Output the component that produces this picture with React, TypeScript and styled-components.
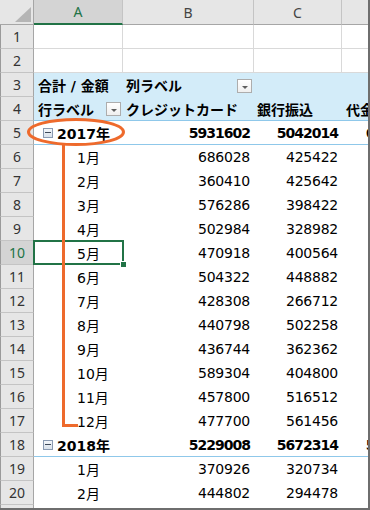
import styled, { createGlobalStyle } from "styled-components";

const GlobalStyle = createGlobalStyle`
  html, body {
    margin: 0;
    padding: 0;
    background: #fff;
  }
`

const Frame = styled.div`
  position: relative;
  width: 370px;
  height: 510px;
  box-sizing: border-box;
  border-right: 2px solid #6e6e6e;
  border-bottom: 2px solid #6e6e6e;
  overflow: hidden;
  background: #fff;
`

const Sheet = styled.div`
  display: grid;
  grid-template-columns: 34px 89px 131px 88px 89px;
  grid-template-rows: 25px;
  grid-auto-rows: 24px;
  width: 431px;
  font-family: "DejaVu Sans", "Noto Sans CJK JP", sans-serif;
  font-size: 14px;
  color: #000;
`

const Corner = styled.div`
  box-sizing: border-box;
  display: flex;
  align-items: flex-end;
  justify-content: flex-end;
  padding: 0 2px 2px 0;
  background: #e6e6e6;
  border-right: 1px solid #a6a6a6;
  border-bottom: 1px solid #a6a6a6;
  &::after {
    content: "";
    width: 16px;
    height: 15px;
    background: #b5b5b5;
    clip-path: polygon(100% 0, 100% 100%, 0 100%);
  }
`

const ColHead = styled.div<{ $active?: boolean }>`
  box-sizing: border-box;
  display: flex;
  align-items: center;
  justify-content: center;
  font-family: "Noto Sans", sans-serif;
  font-size: 14px;
  color: ${(p) => (p.$active ? "#217346" : "#444")};
  background: ${(p) => (p.$active ? "#d4d4d4" : "#e6e6e6")};
  border-right: 1px solid #c4c4c4;
  border-bottom: ${(p) => (p.$active ? "2px solid #217346" : "1px solid #a6a6a6")};
`

const RowHead = styled.div<{ $active?: boolean }>`
  box-sizing: border-box;
  display: flex;
  align-items: center;
  justify-content: center;
  font-family: "Noto Sans", sans-serif;
  font-size: 14px;
  color: ${(p) => (p.$active ? "#217346" : "#333")};
  background: ${(p) => (p.$active ? "#d4d4d4" : "#e6e6e6")};
  border-left: 1px solid #9a9a9a;
  border-right: 1px solid #a6a6a6;
  border-bottom: 1px solid #c4c4c4;
`

const Blank = styled.div`
  box-sizing: border-box;
  border-right: 1px solid #d9d9d9;
  border-bottom: 1px solid #d9d9d9;
`

const Cell = styled.div<{ $right?: boolean; $head?: boolean; $rule?: boolean; $indent?: number }>`
  position: relative;
  box-sizing: border-box;
  display: flex;
  align-items: center;
  justify-content: ${(p) => (p.$right ? "flex-end" : "flex-start")};
  padding: 0 4px 0 ${(p) => p.$indent ?? 4}px;
  background: ${(p) => (p.$head ? "#d3ecf9" : "#fff")};
  border-bottom: 1px solid ${(p) => (p.$rule ? "#8fc8ea" : "transparent")};
  white-space: nowrap;
`

const Label = styled.span<{ $bold?: boolean }>`
  font-weight: ${(p) => (p.$bold ? 700 : 400)};
`

const Num = styled.span<{ $bold?: boolean }>`
  font-weight: ${(p) => (p.$bold ? 700 : 400)};
  letter-spacing: ${(p) => (p.$bold ? "-1px" : "-0.25px")};
`

const Drop = styled.span<{ $low?: boolean }>`
  margin-left: auto;
  margin-right: -2px;
  margin-top: ${(p) => (p.$low ? "3px" : "0")};
  width: 15px;
  height: 14px;
  box-sizing: border-box;
  border: 1px solid #adadad;
  background: linear-gradient(#ffffff, #efefef);
  display: flex;
  align-items: center;
  justify-content: center;
  &::after {
    content: "";
    margin-top: 3px;
    border-left: 3px solid transparent;
    border-right: 3px solid transparent;
    border-top: 3px solid #5e5e5e;
  }
`

const Collapse = styled.span`
  width: 10px;
  height: 10px;
  margin-right: 4px;
  box-sizing: border-box;
  border: 1px solid #8a9ab2;
  background: linear-gradient(#f3f6fa, #d9e1ea);
  display: flex;
  align-items: center;
  justify-content: center;
  &::after {
    content: "";
    width: 6px;
    height: 1px;
    background: #3f4a5a;
  }
`

const Selection = styled.div`
  position: absolute;
  z-index: 2;
  top: -1px;
  left: -1px;
  right: -1px;
  bottom: -1px;
  border: 2px solid #217346;
  pointer-events: none;
  &::after {
    content: "";
    position: absolute;
    right: -5px;
    bottom: -5px;
    width: 5px;
    height: 5px;
    background: #217346;
    border: 1px solid #fff;
  }
`

const Marker = styled.svg`
  position: absolute;
  z-index: 3;
  top: 0;
  left: 0;
  pointer-events: none;
`

type Row = { label: string; b: string; c: string; d: string; total?: boolean };

const rows: Row[] = [
  { label: "2017年", b: "5931602", c: "5042014", d: "6180532", total: true },
  { label: "1月", b: "686028", c: "425422", d: "512330" },
  { label: "2月", b: "360410", c: "425642", d: "498214" },
  { label: "3月", b: "576286", c: "398422", d: "530162" },
  { label: "4月", b: "502984", c: "328982", d: "476520" },
  { label: "5月", b: "470918", c: "400564", d: "501288" },
  { label: "6月", b: "504322", c: "448882", d: "522406" },
  { label: "7月", b: "428308", c: "266712", d: "488934" },
  { label: "8月", b: "440798", c: "502258", d: "540172" },
  { label: "9月", b: "436744", c: "362362", d: "507618" },
  { label: "10月", b: "589304", c: "404800", d: "536980" },
  { label: "11月", b: "457800", c: "516512", d: "519244" },
  { label: "12月", b: "477700", c: "561456", d: "545044" },
  { label: "2018年", b: "5229008", c: "5672314", d: "5914276", total: true },
  { label: "1月", b: "370926", c: "320734", d: "488610" },
  { label: "2月", b: "444802", c: "294478", d: "503126" },
  { label: "3月", b: "512640", c: "436208", d: "497352" },
];

const ACTIVE_ROW = 10;

export default function App() {
  return (
    <>
      <GlobalStyle />
      <Frame>
        <Sheet>
          <Corner />
          <ColHead $active>A</ColHead>
          <ColHead>B</ColHead>
          <ColHead>C</ColHead>
          <ColHead>D</ColHead>

          {[1, 2].map((n) => (
            <>
              <RowHead key={"h" + n}>{n}</RowHead>
              <Blank />
              <Blank />
              <Blank />
              <Blank />
            </>
          ))}

          <RowHead>3</RowHead>
          <Cell $head>
            <Label $bold>合計 / 金額</Label>
          </Cell>
          <Cell $head $indent={3}>
            <Label $bold>列ラベル</Label>
            <Drop $low />
          </Cell>
          <Cell $head />
          <Cell $head />

          <RowHead>4</RowHead>
          <Cell $head $rule>
            <Label $bold>行ラベル</Label>
            <Drop />
          </Cell>
          <Cell $head $rule $indent={3}>
            <Label $bold>クレジットカード</Label>
          </Cell>
          <Cell $head $rule $indent={3}>
            <Label $bold>銀行振込</Label>
          </Cell>
          <Cell $head $rule>
            <Label $bold>代金引換</Label>
          </Cell>

          {rows.map((r, i) => {
            const n = i + 5;
            return (
              <>
                <RowHead key={"r" + n} $active={n === ACTIVE_ROW}>{n}</RowHead>
                <Cell $rule={r.total} $indent={r.total ? 9 : 43}>
                  {r.total && <Collapse />}
                  <Label $bold={r.total}>{r.label}</Label>
                  {n === ACTIVE_ROW && <Selection />}
                </Cell>
                <Cell $right $rule={r.total}>
                  <Num $bold={r.total}>{r.b}</Num>
                </Cell>
                <Cell $right $rule={r.total}>
                  <Num $bold={r.total}>{r.c}</Num>
                </Cell>
                <Cell $right $rule={r.total}>
                  <Num $bold={r.total}>{r.d}</Num>
                </Cell>
              </>
            );
          })}
        </Sheet>

        <Marker width="370" height="510" viewBox="0 0 370 510">
          <ellipse cx="76" cy="132" rx="47.5" ry="12.5" fill="none" stroke="#ee6a2c" strokeWidth="3" />
          <path d="M63.5 144.5 V425.5 H78" fill="none" stroke="#ee6a2c" strokeWidth="3" strokeLinejoin="miter" />
        </Marker>
      </Frame>
    </>
  );
}
